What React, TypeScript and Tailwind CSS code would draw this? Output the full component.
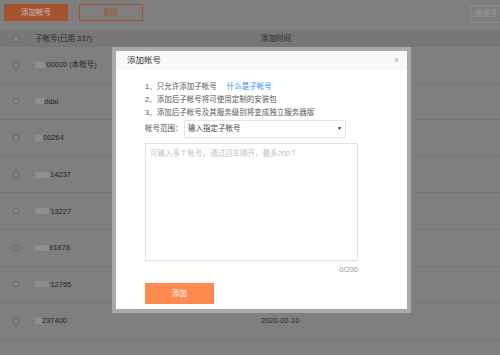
import React from "react"

const rows = [
  { mask: "w-[10px]", text: "'00020 (本帐号)", date: "" },
  { mask: "w-[9px]", text: "ddai", date: "" },
  { mask: "w-[8px]", text: "00264", date: "" },
  { mask: "w-[15px]", text: "14237", date: "" },
  { mask: "w-[14px]", text: "'13227", date: "" },
  { mask: "w-[14px]", text: "91878", date: "" },
  { mask: "w-[14px]", text: "'12765", date: "" },
  { mask: "w-[7px]", text: "237400", date: "2020-02-10" },
]

function Checkbox() {
  return <span className="block w-[6px] h-[6px] rounded-[1px] border border-[#6a6a6a] bg-[#868686]" />
}

export default function App() {
  return (
    <div
      className="relative w-[500px] h-[355px] overflow-hidden bg-[#7f7f7f] text-[#262626]"
      style={{ fontFamily: '"Liberation Sans", "Noto Sans CJK SC", sans-serif' }}
    >
      {/* toolbar */}
      <div className="flex items-start pt-[4px] pl-[4px] h-[30px]">
        <button className="w-[64px] h-[17px] bg-[#a4532f] text-[#c9c0bb] text-[7.5px] leading-[17px]">添加帐号</button>
        <button className="ml-[11px] w-[64px] h-[17px] border border-[#a4532f] text-[#a4532f] text-[7.5px]">删除</button>
        <div className="ml-auto mt-[1px] w-[30px] h-[18px] border border-r-0 border-[#8c8c8c] text-[#9a9a9a] text-[7.5px] leading-[16px] pl-[4px] whitespace-nowrap overflow-hidden">搜索子</div>
      </div>

      {/* table */}
      <div className="text-[7.5px]">
        <div className="flex items-center h-[17px] bg-[#777777]">
          <div className="w-[35px] pl-[13px]"><Checkbox /></div>
          <div className="w-[226px]">子帐号(已用 337)</div>
          <div>添加时间</div>
        </div>
        {rows.map((r, i) => (
          <div key={i} className="flex items-center h-[36.6px] border-b border-[#777777]">
            <div className="w-[35px] pl-[13px]"><Checkbox /></div>
            <div className="w-[226px] flex items-center">
              <span className={`inline-block h-[6px] bg-[#8e8e8e] ${r.mask}`} />
              <span>{r.text}</span>
            </div>
            <div>{r.date}</div>
          </div>
        ))}
      </div>

      {/* modal */}
      <div className="absolute left-[112px] top-[47px] w-[299px] h-[266px] p-[4px] bg-[#a9a9a9]">
        <div className="w-full h-full bg-white flex flex-col">
          <div className="flex items-center justify-between h-[19px] bg-[#f8f8f8] pl-[11px] pr-[8px]">
            <span className="text-[8.5px] text-[#333]">添加帐号</span>
            <span className="text-[9px] text-[#aaa] leading-none">×</span>
          </div>
          <div className="pl-[29px] pr-[49px] pt-[10px] text-[7.5px] text-[#555]">
            <div className="leading-[13px]">
              <div>1、只允许添加子帐号<span className="ml-[10px] text-[#2b8ff7]">什么是子帐号</span></div>
              <div>2、添加后子帐号将可使用定制的安装包</div>
              <div>3、添加后子帐号及其服务级别将变成独立服务器版</div>
            </div>
            <div className="flex items-center mt-[1px]">
              <span className="w-[39px]">帐号范围：</span>
              <div className="flex items-center justify-between w-[162px] h-[18px] border border-[#e6e6e6] px-[3px] text-[#444]">
                <span>输入指定子帐号</span>
                <span className="text-[5px] text-[#222]">▼</span>
              </div>
            </div>
            <div className="mt-[5px] w-[213px] h-[118px] border border-[#e3e3e3] px-[4px] pt-[4px] text-[#c4c4c4]">
              可输入多个帐号，通过回车隔开，最多200个
            </div>
            <div className="w-[213px] text-right text-[#999] mt-[4px] leading-[10px]">0/200</div>
            <button className="mt-[8px] w-[69px] h-[21px] bg-[#ff8a50] text-white text-[7.5px]">添加</button>
          </div>
        </div>
      </div>
    </div>
  )
}
